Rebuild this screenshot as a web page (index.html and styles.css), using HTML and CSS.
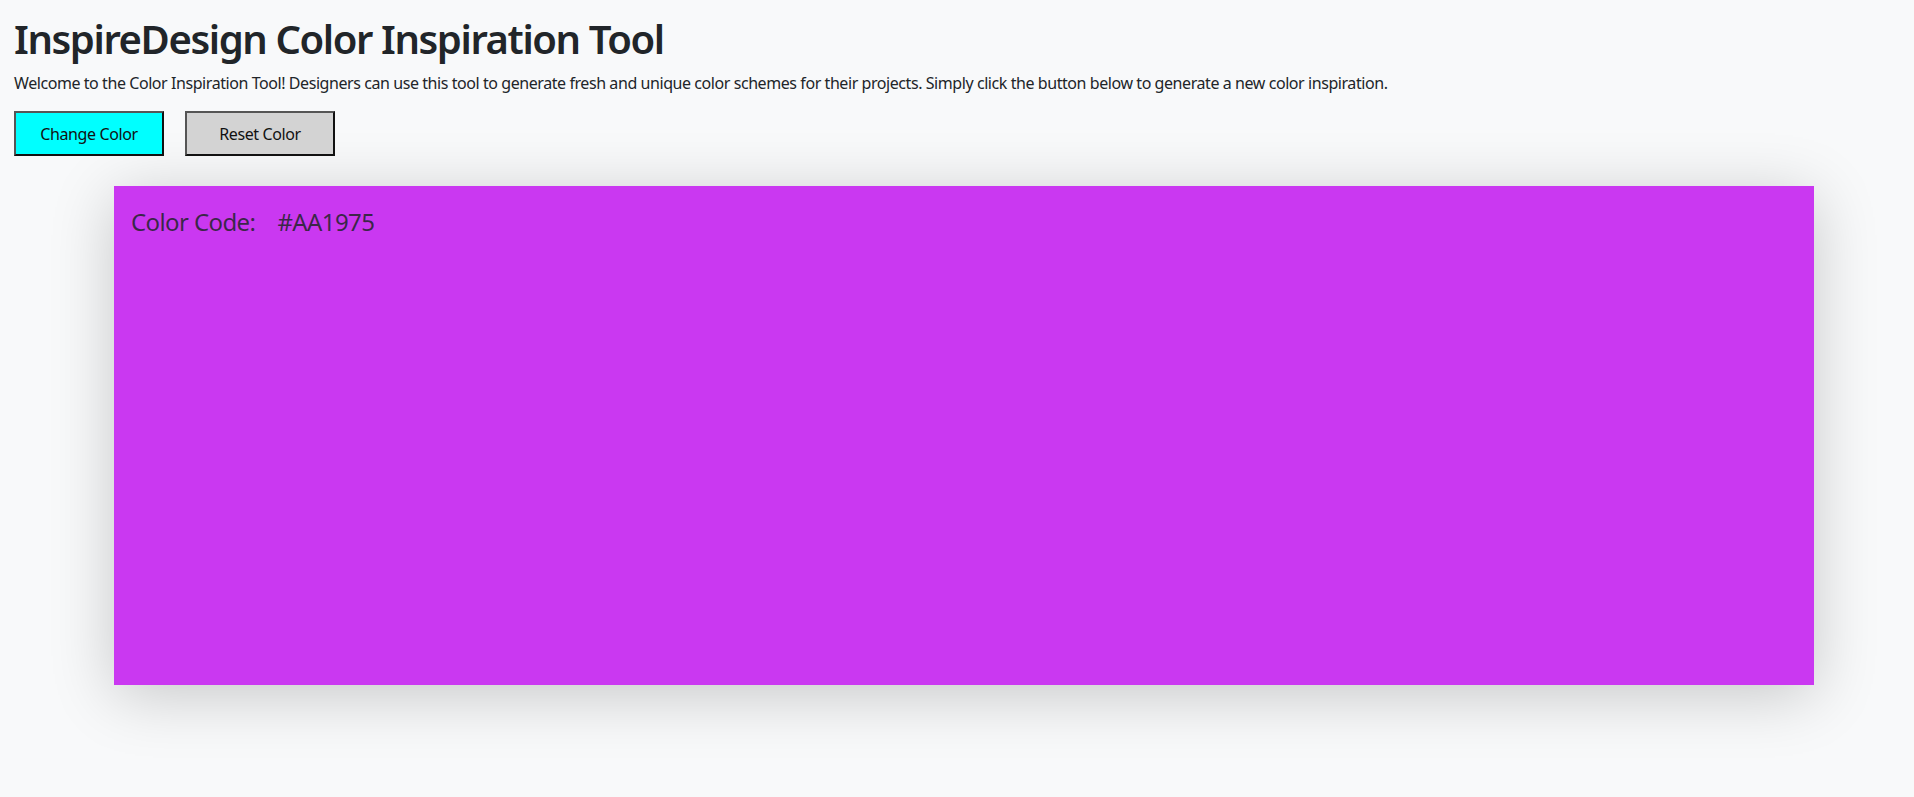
FILE: index.html
```html
<!DOCTYPE html>
<html lang="en">
<head>
<meta charset="utf-8">
<title>InspireDesign Color Inspiration Tool</title>
<link rel="stylesheet" href="styles.css">
</head>
<body>
<div class="page">
  <h1 class="title">InspireDesign Color Inspiration Tool</h1>
  <p class="intro">Welcome to the Color Inspiration Tool! Designers can use this tool to generate fresh and unique color schemes for their projects. Simply click the button below to generate a new color inspiration.</p>
  <div class="actions">
    <button class="btn btn-change" type="button">Change Color</button>
    <button class="btn btn-reset" type="button">Reset Color</button>
  </div>
  <div class="swatch">
    <div class="code"><span class="code-label">Color Code:</span><span class="code-value">#AA1975</span></div>
  </div>
</div>
</body>
</html>
```

FILE: styles.css
```css
html, body {
  margin: 0;
  padding: 0;
  background: #f8f9fa;
}
body {
  min-height: 100vh;
  font-family: "Noto Sans", "Open Sans", sans-serif;
  color: #212529;
  font-size: 16px;
  line-height: 1.5;
}
.page {
  padding: 15px 14px 100px 14px;
}
.title {
  margin: 0 0 8px 0;
  font-size: 40px;
  font-weight: 600;
  line-height: 1.2;
  letter-spacing: -1.4px;
}
.intro {
  margin: 0 0 16px 0;
  font-size: 16px;
  letter-spacing: -0.43px;
}
.actions {
  display: flex;
  gap: 21px;
}
.btn {
  font-family: inherit;
  font-size: 16px;
  line-height: 20px;
  width: 150px;
  height: 45px;
  padding: 0;
  border: 2px solid;
  border-color: #555 #111 #111 #555;
  color: #111;
  letter-spacing: -0.4px;
  cursor: pointer;
}
.btn-change {
  background: #00ffff;
}
.btn-reset {
  background: #d3d3d3;
}
.swatch {
  margin: 30px 0 0 100px;
  width: 1700px;
  height: 499px;
  box-sizing: border-box;
  padding: 22px 17px;
  background: #ca38f1;
  box-shadow: 0 10px 60px rgba(0, 0, 0, 0.2);
}
.code {
  font-size: 24px;
  line-height: 1.2;
  color: rgba(33, 37, 41, 0.85);
  letter-spacing: -0.6px;
}
.code-value {
  margin-left: 22px;
}
```
